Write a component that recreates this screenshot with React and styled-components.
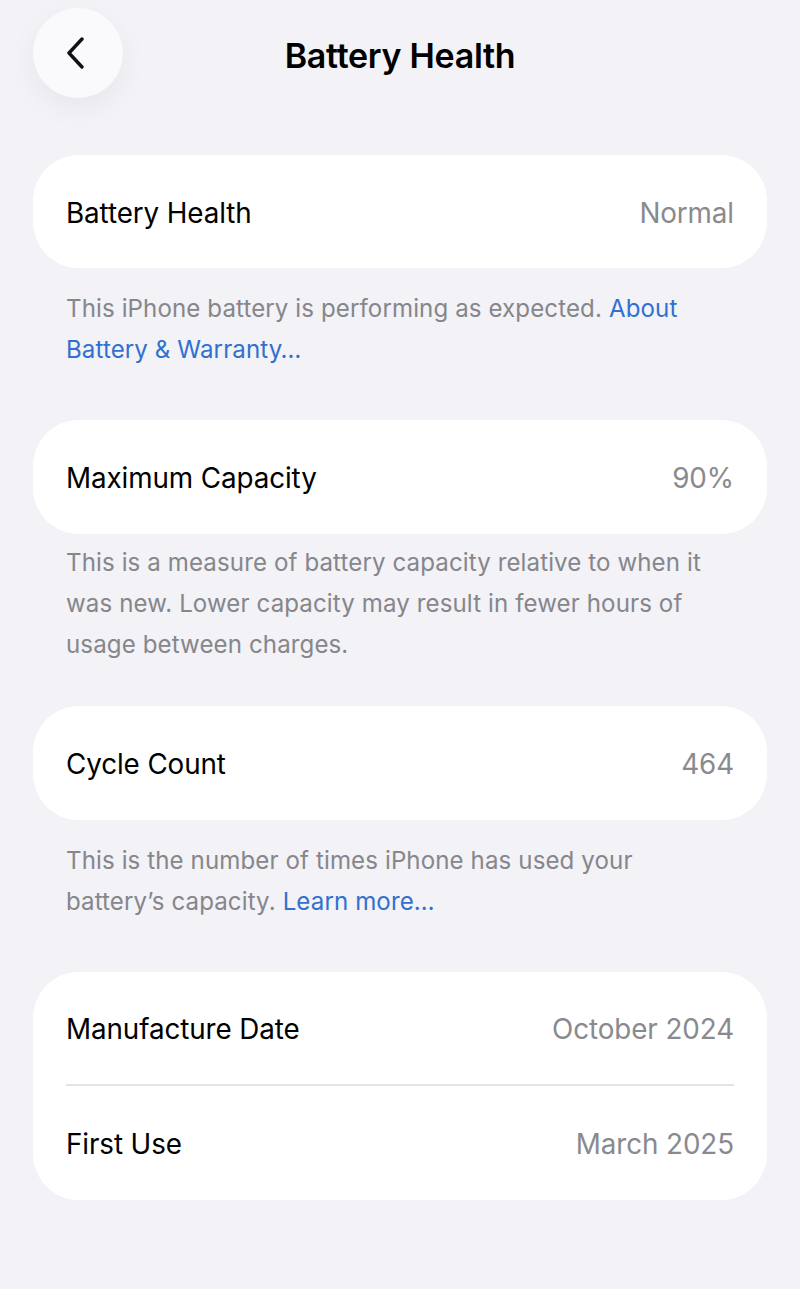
import styled, { createGlobalStyle } from "styled-components";

const GlobalStyle = createGlobalStyle`
  html, body {
    margin: 0;
    padding: 0;
    background: #f2f2f7;
  }
  body {
    font-family: Inter, "Noto Sans", "Liberation Sans", sans-serif;
    -webkit-font-smoothing: antialiased;
  }
`;

const Page = styled.div`
  width: 800px;
  min-height: 1289px;
  background: #f2f2f7;
  padding: 8px 33px 40px;
  box-sizing: border-box;
`;

const Header = styled.header`
  display: grid;
  grid-template-columns: 90px 1fr 90px;
  align-items: center;
  height: 90px;
`;

const BackButton = styled.button`
  width: 90px;
  height: 90px;
  border-radius: 50%;
  border: none;
  background: #fafafc;
  box-shadow: 0 10px 30px rgba(0, 0, 0, 0.05);
  display: flex;
  align-items: center;
  justify-content: center;
  padding: 0 4px 0 0;
  cursor: pointer;
`;

const Title = styled.h1`
  margin: 4px 0 0;
  text-align: center;
  font-size: 34px;
  font-weight: 600;
  color: #000;
  letter-spacing: -0.3px;
`;

const Card = styled.div`
  background: #fff;
  border-radius: 46px;
  margin-top: ${(p) => p.$top}px;
  padding: 0 33px;
`;

const Row = styled.div`
  height: ${(p) => p.$h || 113}px;
  display: flex;
  align-items: center;
  justify-content: space-between;
  font-size: 27.8px;
  letter-spacing: -0.1px;
  padding-top: 2px;
  box-sizing: border-box;
`;

const Label = styled.span`
  color: #000;
`;

const Value = styled.span`
  color: #8a8a8e;
`;

const Divider = styled.div`
  height: 2px;
  background: #e4e4e8;
`;

const Footer = styled.p`
  margin: ${(p) => p.$top}px 0 0;
  padding: 0 33px;
  font-size: 24.1px;
  line-height: 41px;
  color: #86868b;
  letter-spacing: 0.1px;
`;

const Link = styled.a`
  color: #3170cf;
  text-decoration: none;
`;

const Chevron = () => (
  <svg width="20" height="32" viewBox="0 0 20 32" fill="none">
    <path
      d="M16 2 L3 16 L16 30"
      stroke="#111"
      strokeWidth="3.4"
      strokeLinecap="round"
      strokeLinejoin="round"
    />
  </svg>
);

export default function App() {
  return (
    <>
      <GlobalStyle />
      <Page>
        <Header>
          <BackButton aria-label="Back">
            <Chevron />
          </BackButton>
          <Title>Battery Health</Title>
          <span />
        </Header>

        <Card $top={57}>
          <Row>
            <Label>Battery Health</Label>
            <Value>Normal</Value>
          </Row>
        </Card>
        <Footer $top={20}>
          This iPhone battery is performing as expected.{" "}
          <Link>About Battery &amp; Warranty…</Link>
        </Footer>

        <Card $top={50}>
          <Row $h={114}>
            <Label>Maximum Capacity</Label>
            <Value>90%</Value>
          </Row>
        </Card>
        <Footer $top={8}>
          This is a measure of battery capacity relative to when it was new.
          Lower capacity may result in fewer hours of usage between charges.
        </Footer>

        <Card $top={41}>
          <Row $h={114}>
            <Label>Cycle Count</Label>
            <Value>464</Value>
          </Row>
        </Card>
        <Footer $top={20}>
          This is the number of times iPhone has used your battery’s capacity.{" "}
          <Link>Learn more…</Link>
        </Footer>

        <Card $top={50}>
          <Row $h={112}>
            <Label>Manufacture Date</Label>
            <Value>October 2024</Value>
          </Row>
          <Divider />
          <Row $h={114}>
            <Label>First Use</Label>
            <Value>March 2025</Value>
          </Row>
        </Card>
      </Page>
    </>
  );
}
